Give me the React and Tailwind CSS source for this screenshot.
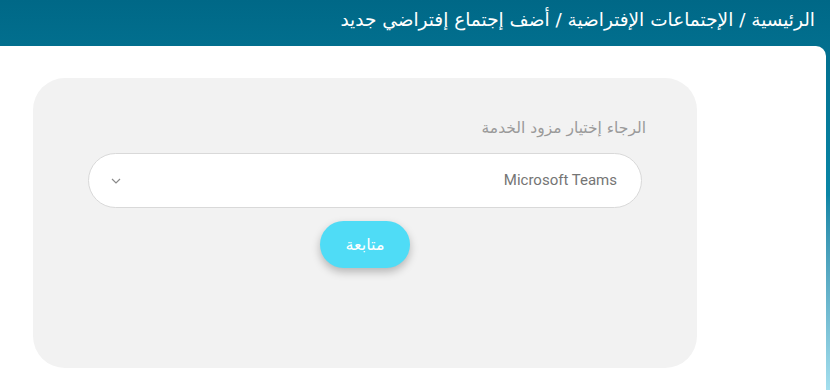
const Breadcrumb = () => {
    return (
        <div className="h-[46px] flex items-center justify-end pr-[15px] pb-[7px]">
            <div className="text-white text-[18.5px] font-['DejaVu_Sans',sans-serif] whitespace-nowrap" dir="rtl">
                الرئيسية / الإجتماعات الإفتراضية / أضف إجتماع إفتراضي جديد
            </div>
        </div>
    )
}

const App = () => {
    return (
        <div className="w-[830px] h-[390px] flex flex-col overflow-hidden bg-linear-to-b from-[#006887] via-[#0a86a6] via-50% to-[#a4dfee]">
            <Breadcrumb />

            {/* Content Card */}
            <div className="flex-1 flex pr-[4px]">
                <div className="flex-1 bg-white rounded-tr-[10px] pt-[32px] pl-[33px]">
                    <div className="w-[664px] h-[290px] bg-[#f2f2f2] rounded-[32px] px-[55px] pt-[40px] flex flex-col" dir="rtl">
                        <label className="text-[#9a9a9a] text-[15.5px] font-['DejaVu_Sans',sans-serif] -mr-[4px] leading-[20px]">
                            الرجاء إختيار مزود الخدمة
                        </label>

                        <div className="mt-[15px] h-[55px] bg-white rounded-full border border-[#d9d9d9] flex items-center justify-between pr-[24px] pl-[22px]">
                            <span className="text-[#757575] text-[15px] font-['Roboto',sans-serif]" dir="ltr">Microsoft Teams</span>
                            <svg width="10" height="6" viewBox="0 0 10 6" fill="none" stroke="#8a8a8a" strokeWidth="1.2">
                                <path d="M1 1l4 4 4-4" />
                            </svg>
                        </div>

                        <div className="flex justify-center mt-[13px]">
                            <button className="w-[90px] h-[47px] rounded-full bg-[#4fdcf6] text-white text-[16px] font-['DejaVu_Sans',sans-serif] shadow-[0_4px_8px_rgba(0,0,0,0.25)]">
                                متابعة
                            </button>
                        </div>
                    </div>
                </div>
            </div>
        </div>
    )
}

export default App
